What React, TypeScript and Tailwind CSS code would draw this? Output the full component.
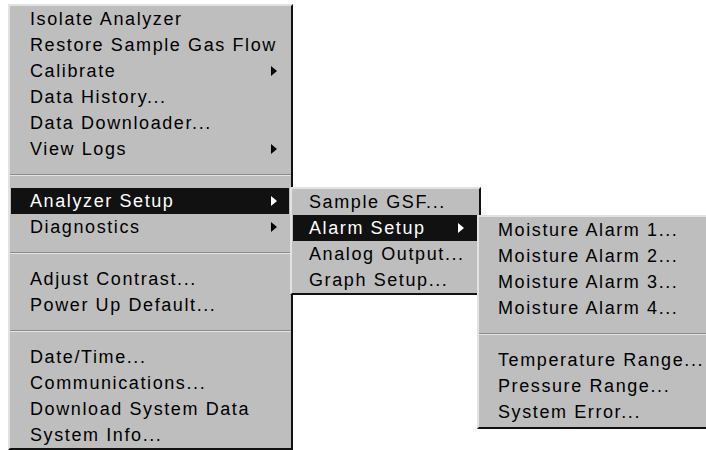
type Item = { label: string; sub?: boolean; active?: boolean } | "sep";

const mainItems: Item[] = [
  { label: "Isolate Analyzer" },
  { label: "Restore Sample Gas Flow" },
  { label: "Calibrate", sub: true },
  { label: "Data History..." },
  { label: "Data Downloader..." },
  { label: "View Logs", sub: true },
  "sep",
  { label: "Analyzer Setup", sub: true, active: true },
  { label: "Diagnostics", sub: true },
  "sep",
  { label: "Adjust Contrast..." },
  { label: "Power Up Default..." },
  "sep",
  { label: "Date/Time..." },
  { label: "Communications..." },
  { label: "Download System Data" },
  { label: "System Info..." },
];

const setupItems: Item[] = [
  { label: "Sample GSF..." },
  { label: "Alarm Setup", sub: true, active: true },
  { label: "Analog Output..." },
  { label: "Graph Setup..." },
];

const alarmItems: Item[] = [
  { label: "Moisture Alarm 1..." },
  { label: "Moisture Alarm 2..." },
  { label: "Moisture Alarm 3..." },
  { label: "Moisture Alarm 4..." },
  "sep",
  { label: "Temperature Range..." },
  { label: "Pressure Range..." },
  { label: "System Error..." },
];

function Arrow({ light }: { light?: boolean }) {
  return (
    <svg width="6" height="10" viewBox="0 0 6 10" className="shrink-0">
      <path d="M0 0 L6 5 L0 10 Z" fill={light ? "#ffffff" : "#000000"} />
    </svg>
  );
}

function MenuRows({ items, pad, arrowPad }: { items: Item[]; pad: string; arrowPad: string }) {
  return (
    <>
      {items.map((it, i) =>
        it === "sep" ? (
          <div key={i} className="h-[26px] flex items-center">
            <div className="w-full border-t border-t-[#8a8a8a] border-b border-b-[#e4e4e4]" />
          </div>
        ) : (
          <div
            key={i}
            className={`h-[26px] flex items-center justify-between ml-[1px] mr-[2px] ${pad} ${arrowPad} ${
              it.active ? "bg-[#111111] text-white" : "text-black"
            }`}
          >
            <span className="whitespace-nowrap">{it.label}</span>
            {it.sub && <Arrow light={it.active} />}
          </div>
        )
      )}
    </>
  );
}

export default function App() {
  return (
    <div
      className="w-[706px] h-[450px] bg-white overflow-hidden pl-[8px] pt-[4px] text-[18px] leading-[26px] tracking-[1.6px]"
      style={{ fontFamily: '"Liberation Sans", Arial, sans-serif' }}
    >
      <div className="relative">
        {/* Main menu */}
        <div className="w-[285px] h-[446px] bg-[#bebebe] border-2 border-t-[#e2e2e2] border-l-[#e2e2e2] border-r-[#111111] border-b-[#111111]">
          <MenuRows items={mainItems} pad="pl-[19px]" arrowPad="pr-[12px]" />
        </div>

        {/* Analyzer Setup submenu */}
        <div className="absolute left-[282px] top-[183px] w-[191px] h-[108px] bg-[#bebebe] border-2 border-t-[#e2e2e2] border-l-[#e2e2e2] border-r-[#111111] border-b-[#111111]">
          <MenuRows items={setupItems} pad="pl-[16px]" arrowPad="pr-[13px]" />
        </div>

        {/* Alarm Setup submenu */}
        <div className="absolute left-[469px] top-[211px] w-[250px] h-[214px] bg-[#bebebe] border-2 border-t-[#e2e2e2] border-l-[#e2e2e2] border-r-[#111111] border-b-[#111111]">
          <MenuRows items={alarmItems} pad="pl-[18px]" arrowPad="pr-[12px]" />
        </div>
      </div>
    </div>
  );
}
